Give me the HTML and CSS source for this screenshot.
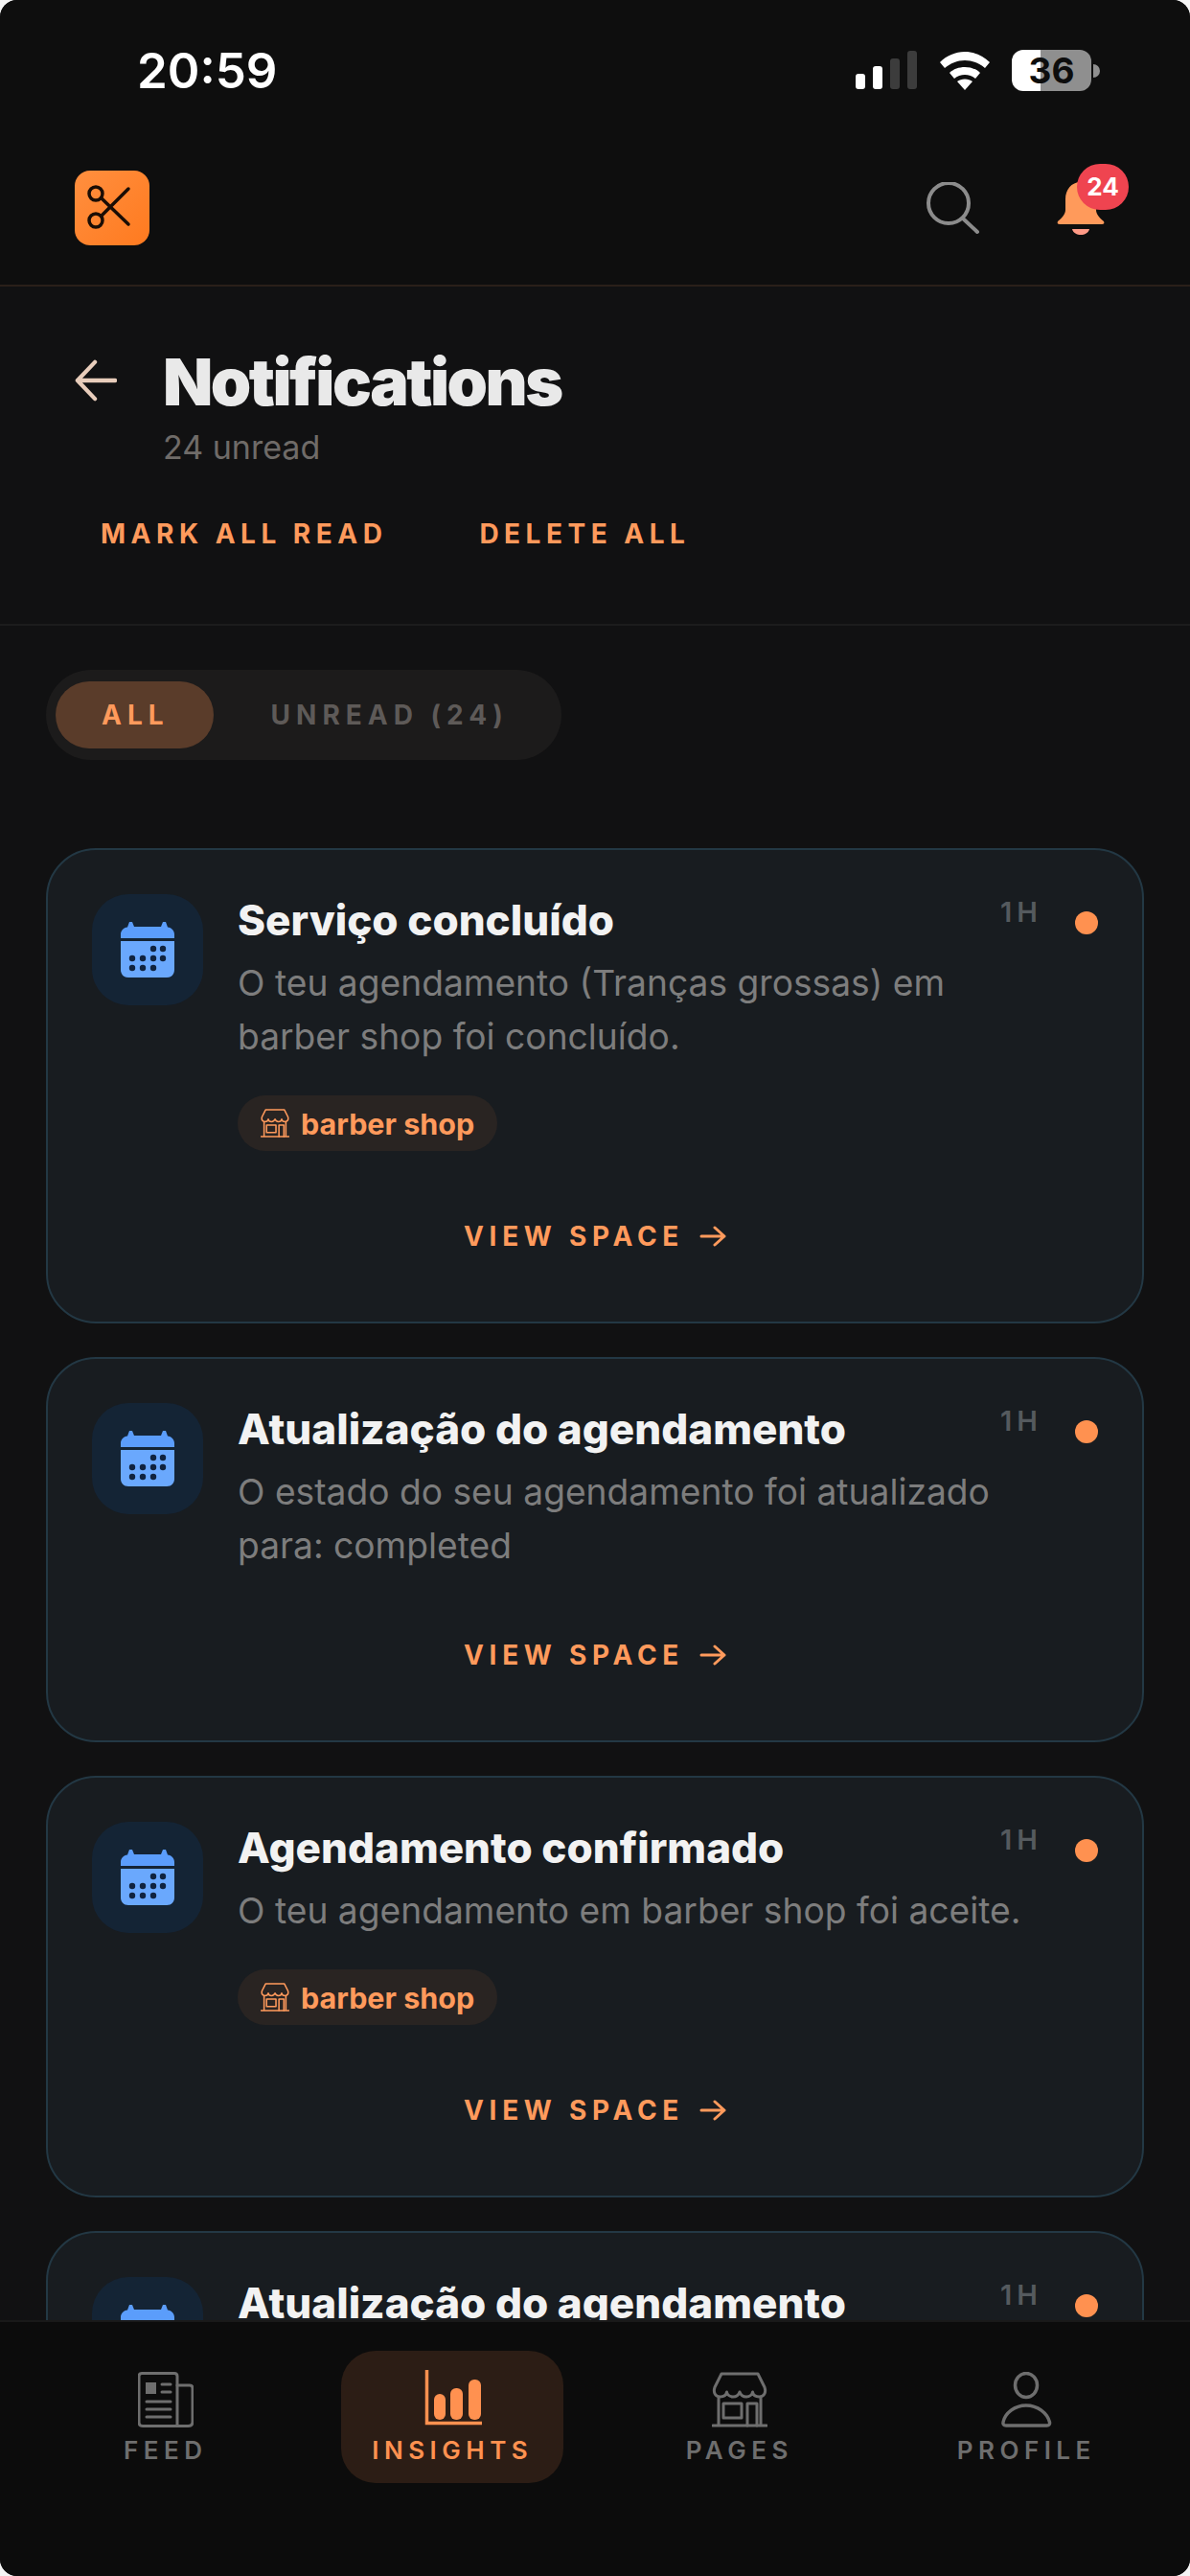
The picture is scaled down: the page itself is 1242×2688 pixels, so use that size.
FILE: index.html
```html
<!DOCTYPE html>
<html>
<head>
    <title>Notifications</title>
    <link rel="stylesheet" href="styles.css">
</head>
<body>
    <svg class="defs" width="0" height="0">
        <symbol id="calendar" viewBox="0 0 58 58">
            <path d="M10 0h3l2 5h28l2-5h3l2 5.500c4 .5 7 3.500 7 7.500v4H1v-4c0-4 3-7 7-7.500z" fill="#5b9dfb"/>
            <path d="M1 20h56v30c0 4.500-3 8-8 8H9c-5 0-8-3.500-8-8z" fill="#6aa8fd"/>
            <g fill="#10233f">
                <circle cx="35" cy="28" r="3.200"/><circle cx="45" cy="28" r="3.200"/>
                <circle cx="13" cy="38" r="3.200"/><circle cx="24" cy="38" r="3.200"/><circle cx="35" cy="38" r="3.200"/><circle cx="45" cy="38" r="3.200"/>
                <circle cx="13" cy="48" r="3.200"/><circle cx="24" cy="48" r="3.200"/><circle cx="35" cy="48" r="3.200"/>
            </g>
        </symbol>
        <symbol id="store" viewBox="0 0 58 58">
            <g fill="none" stroke="currentColor" stroke-width="3" stroke-linecap="round" stroke-linejoin="round">
                <path d="M10 2h38l7 14c2 6-1 10-5.500 10-4 0-6.500-2-7-5-.5 3-3.500 5-6.500 5s-6-2-7-5c-1 3-4 5-7 5s-6-2-6.500-5c-.5 3-3 5-7 5C4 26 1 22 3 16z"/>
                <path d="M7 27v29M51 27v29M1 56h56"/>
                <path d="M12 33h19v15H12z"/>
                <path d="M37 56V33h10v23"/>
            </g>
        </symbol>
    </svg>

    <div class="screen">
        <div class="status-bar">
            <span class="clock">20:59</span>
            <div class="status-icons">
                <div class="signal">
                    <i class="bar bar-1"></i>
                    <i class="bar bar-2"></i>
                    <i class="bar bar-3"></i>
                    <i class="bar bar-4"></i>
                </div>
                <svg class="wifi" viewBox="0 0 56 42">
                    <path d="M2 13C9 6 18 2 28 2s19 4 26 11l-5 6c-6-5-13-8-21-8S13 14 7 19z" fill="#fff"/>
                    <path d="M12 24c4-4 10-6 16-6s12 2 16 6l-5 6c-3-2.500-7-4-11-4s-8 1.500-11 4z" fill="#fff"/>
                    <path d="M20 33c2-1.500 5-2.500 8-2.500s6 1 8 2.500L28 42z" fill="#fff"/>
                </svg>
                <div class="battery">
                    <div class="battery-body"><span>36</span></div>
                    <i class="battery-tip"></i>
                </div>
            </div>
        </div>

        <header class="topbar">
            <div class="logo">
                <svg viewBox="0 0 78 78" width="78" height="78" fill="none" stroke="#1a0d05" stroke-width="3.500" stroke-linecap="round">
                    <circle cx="22" cy="24" r="7"/>
                    <circle cx="22" cy="52" r="7"/>
                    <path d="M28 29l28 27M28 47L56 19"/>
                </svg>
            </div>
            <div class="topbar-actions">
                <svg class="search" viewBox="0 0 60 60" fill="none" stroke="#8c8c8c" stroke-width="4" stroke-linecap="round">
                    <circle cx="26" cy="22" r="21"/>
                    <path d="M41 38l15 14"/>
                </svg>
                <div class="bell">
                    <svg viewBox="0 0 64 64" width="64" height="64">
                        <path d="M32 8c-10 0-16 8-16 18v11c0 4-3 8-8 12-1 2 0 3 2 3h44c2 0 3-1 2-3-5-4-8-8-8-12V26c0-10-6-18-16-18z" fill="#ff9a5b"/>
                        <path d="M23 57h18c-1 4-5 6-9 6s-8-2-9-6z" fill="#ff9a86"/>
                    </svg>
                    <span class="badge">24</span>
                </div>
            </div>
        </header>

        <section class="page-head">
            <div class="title-row">
                <svg class="back" viewBox="0 0 46 46" fill="none" stroke="#e8cdbb" stroke-width="4.500" stroke-linecap="round" stroke-linejoin="round">
                    <path d="M44 23H3M22 3L3 23l19 20"/>
                </svg>
                <div>
                    <h1>Notifications</h1>
                    <p class="unread">24 unread</p>
                </div>
            </div>
            <div class="head-actions">
                <a>MARK ALL READ</a>
                <a>DELETE ALL</a>
            </div>
        </section>

        <main class="content">
            <div class="tabs">
                <span class="tab tab-active">ALL</span>
                <span class="tab">UNREAD (24)</span>
            </div>

            <article class="card">
                <div class="card-top">
                    <div class="card-icon"><svg width="58" height="58"><use href="#calendar"/></svg></div>
                    <div class="card-body">
                        <div class="card-head">
                            <h2>Serviço concluído</h2>
                            <span class="time">1H</span>
                            <i class="dot"></i>
                        </div>
                        <p>O teu agendamento (Tranças grossas) em barber shop foi concluído.</p>
                        <span class="chip"><svg width="30" height="30"><use href="#store"/></svg>barber shop</span>
                    </div>
                </div>
                <a class="view">VIEW SPACE <svg viewBox="0 0 28 24" width="28" height="24" fill="none" stroke="#ff9a5c" stroke-width="3" stroke-linecap="round" stroke-linejoin="round"><path d="M2 12h24M16 3l10 9-10 9"/></svg></a>
            </article>

            <article class="card">
                <div class="card-top">
                    <div class="card-icon"><svg width="58" height="58"><use href="#calendar"/></svg></div>
                    <div class="card-body">
                        <div class="card-head">
                            <h2>Atualização do agendamento</h2>
                            <span class="time">1H</span>
                            <i class="dot"></i>
                        </div>
                        <p>O estado do seu agendamento foi atualizado para: completed</p>
                    </div>
                </div>
                <a class="view">VIEW SPACE <svg viewBox="0 0 28 24" width="28" height="24" fill="none" stroke="#ff9a5c" stroke-width="3" stroke-linecap="round" stroke-linejoin="round"><path d="M2 12h24M16 3l10 9-10 9"/></svg></a>
            </article>

            <article class="card">
                <div class="card-top">
                    <div class="card-icon"><svg width="58" height="58"><use href="#calendar"/></svg></div>
                    <div class="card-body">
                        <div class="card-head">
                            <h2>Agendamento confirmado</h2>
                            <span class="time">1H</span>
                            <i class="dot"></i>
                        </div>
                        <p>O teu agendamento em barber shop foi aceite.</p>
                        <span class="chip"><svg width="30" height="30"><use href="#store"/></svg>barber shop</span>
                    </div>
                </div>
                <a class="view">VIEW SPACE <svg viewBox="0 0 28 24" width="28" height="24" fill="none" stroke="#ff9a5c" stroke-width="3" stroke-linecap="round" stroke-linejoin="round"><path d="M2 12h24M16 3l10 9-10 9"/></svg></a>
            </article>

            <article class="card">
                <div class="card-top">
                    <div class="card-icon"><svg width="58" height="58"><use href="#calendar"/></svg></div>
                    <div class="card-body">
                        <div class="card-head">
                            <h2>Atualização do agendamento</h2>
                            <span class="time">1H</span>
                            <i class="dot"></i>
                        </div>
                    </div>
                </div>
            </article>
        </main>

        <nav class="bottom-nav">
            <div class="nav-item">
                <svg viewBox="0 0 58 58" width="58" height="58" fill="none" stroke="currentColor" stroke-width="3" stroke-linejoin="round" stroke-linecap="round">
                    <path d="M4 1.500h34c2 0 3 1 3 3V56.500H5c-2.500 0-4-1.500-4-4V4.500c0-2 1-3 3-3z"/>
                    <path d="M41 14h13c2 0 3 1 3 3v35c0 3-2 4.500-4.500 4.500H41"/>
                    <rect x="8" y="11" width="11" height="12" fill="currentColor" stroke="none"/>
                    <path d="M25 13h9M25 21h9M9 31h25M9 39h25M9 47h25"/>
                </svg>
                <span>FEED</span>
            </div>
            <div class="nav-item nav-active">
                <svg class="insights-icon" viewBox="0 0 58 58" width="58" height="58">
                    <path d="M2.500 -2v55.500h57.500" fill="none" stroke="currentColor" stroke-width="3.500"/>
                    <rect x="10" y="23" width="12" height="27" rx="6" fill="currentColor"/>
                    <rect x="27" y="17" width="13" height="33" rx="6" fill="currentColor"/>
                    <rect x="46" y="8" width="13" height="42" rx="6" fill="currentColor"/>
                </svg>
                <span>INSIGHTS</span>
            </div>
            <div class="nav-item">
                <svg width="58" height="58"><use href="#store"/></svg>
                <span>PAGES</span>
            </div>
            <div class="nav-item">
                <svg viewBox="0 0 58 58" width="58" height="58" fill="none" stroke="currentColor" stroke-width="3.500" stroke-linejoin="round">
                    <ellipse cx="29" cy="14" rx="11.500" ry="12.500"/>
                    <path d="M8 56c-2.500 0-3.500-1.500-3-3.500C7 43 17 35 29 35s22 8 24.500 17.500c.5 2-.5 3.500-3 3.500z"/>
                </svg>
                <span>PROFILE</span>
            </div>
        </nav>
    </div>
</body>
</html>
```

FILE: styles.css
```css
* {
    box-sizing: border-box;
}
body {
    margin: 0;
    background-color: #f4f4f4;
    font-family: Inter, "Noto Sans", sans-serif;
}
h1, h2, p {
    margin: 0;
}
.defs {
    display: block;
    height: 0;
}
.screen {
    width: 1242px;
    height: 2688px;
    display: flex;
    flex-direction: column;
    overflow: hidden;
    border-radius: 18px;
    background-color: #111112;
}

/* status bar */
.status-bar {
    flex: none;
    height: 146px;
    padding: 0 94px 0 143px;
    display: flex;
    justify-content: space-between;
    background-color: #0e0e0e;
}
.clock {
    margin-top: 44px;
    font-size: 51px;
    line-height: 60px;
    font-weight: 600;
    color: #fff;
}
.status-icons {
    display: flex;
    align-items: flex-start;
    margin-top: 52px;
}
.signal {
    display: flex;
    align-items: flex-end;
    gap: 8px;
    height: 41px;
    margin-right: 22px;
}
.bar {
    display: block;
    width: 10px;
    border-radius: 3px;
    background-color: #fff;
}
.bar-1 {
    height: 16px;
}
.bar-2 {
    height: 24px;
}
.bar-3 {
    height: 32px;
    background-color: #3c3c3c;
}
.bar-4 {
    height: 40px;
    background-color: #3c3c3c;
}
.wifi {
    width: 56px;
    height: 42px;
    margin-right: 21px;
}
.battery {
    display: flex;
    align-items: center;
}
.battery-body {
    width: 83px;
    height: 43px;
    border-radius: 12px;
    background: linear-gradient(90deg, #fff 36%, #8f8f8f 36%);
    text-align: center;
    font-size: 37px;
    line-height: 43px;
    font-weight: 700;
    color: #0d0d0d;
}
.battery-tip {
    display: block;
    width: 7px;
    height: 14px;
    margin-left: 2px;
    border-radius: 0 7px 7px 0;
    background-color: #8f8f8f;
}

/* top bar */
.topbar {
    flex: none;
    height: 153px;
    padding: 32px 82px 0 78px;
    display: flex;
    justify-content: space-between;
    background-color: #0e0e0e;
    border-bottom: 2px solid #2a1f19;
}
.logo {
    width: 78px;
    height: 78px;
    border-radius: 16px;
    background: linear-gradient(135deg, #ff8f3f, #ff7a1f);
}
.topbar-actions {
    display: flex;
    gap: 72px;
    margin-top: 12px;
}
.search {
    width: 60px;
    height: 60px;
}
.bell {
    position: relative;
    width: 64px;
    height: 64px;
    margin-top: -8px;
}
.badge {
    position: absolute;
    left: 28px;
    top: -11px;
    width: 54px;
    height: 48px;
    border-radius: 24px;
    background-color: #ef4450;
    text-align: center;
    font-size: 26px;
    line-height: 48px;
    font-weight: 700;
    color: #fff;
}

/* page heading */
.page-head {
    flex: none;
    height: 354px;
    padding: 61px 0 0 78px;
    border-bottom: 2px solid #1c1c1c;
}
.title-row {
    display: flex;
    gap: 48px;
}
.back {
    width: 44px;
    height: 44px;
    margin-top: 15px;
}
h1 {
    font-size: 68px;
    line-height: 76px;
    font-weight: 900;
    letter-spacing: -2.500px;
    color: #e9e9e9;
}
.unread {
    margin-top: 11px;
    font-size: 34px;
    line-height: 40px;
    color: #6f6b68;
}
.head-actions {
    display: flex;
    gap: 96px;
    margin-top: 50px;
    padding-left: 27px;
    font-size: 28px;
    line-height: 40px;
    font-weight: 700;
    letter-spacing: 5.500px;
    color: #ff9a5c;
}

/* list */
.content {
    flex: 1;
    min-height: 0;
    overflow: hidden;
    padding: 46px 48px 0;
}
.tabs {
    width: 538px;
    height: 94px;
    padding: 12px 10px;
    display: flex;
    border-radius: 47px;
    background-color: #1c1b1b;
    margin-bottom: 92px;
}
.tab {
    padding: 0 0 0 60px;
    white-space: nowrap;
    font-size: 28px;
    line-height: 70px;
    font-weight: 700;
    letter-spacing: 6px;
    color: #5e5a58;
}
.tab-active {
    padding: 0 46px 0 48px;
    border-radius: 35px;
    background-color: #5a3c2a;
    color: #ff9a5c;
}
.card {
    margin-bottom: 35px;
    padding: 46px 46px 69px;
    border: 2px solid #233844;
    border-radius: 52px;
    background-color: #181c20;
}
.card-top {
    display: flex;
    gap: 36px;
}
.card-icon {
    flex: none;
    width: 116px;
    height: 116px;
    display: flex;
    align-items: center;
    justify-content: center;
    border-radius: 38px;
    background-color: #142435;
}
.card-body {
    flex: 1;
    min-width: 0;
}
.card-head {
    display: flex;
    align-items: flex-start;
}
h2 {
    flex: 1;
    font-size: 44px;
    line-height: 54px;
    font-weight: 800;
    color: #f2f2f2;
}
.time {
    margin-right: 34px;
    font-size: 29px;
    line-height: 38px;
    font-weight: 600;
    letter-spacing: 5px;
    color: #555a5e;
}
.dot {
    display: block;
    width: 24px;
    height: 24px;
    margin-top: 18px;
    border-radius: 50%;
    background-color: #ff9150;
}
.card-body p {
    margin-top: 11px;
    padding-right: 40px;
    font-size: 37.200px;
    line-height: 56px;
    color: #7d7d7d;
}
.chip {
    display: inline-flex;
    align-items: center;
    gap: 12px;
    height: 58px;
    margin-top: 33px;
    margin-bottom: 3px;
    padding: 0 24px;
    border-radius: 29px;
    background-color: #292422;
    font-size: 30.500px;
    font-weight: 700;
    color: #ff9a5c;
}
.view {
    display: flex;
    align-items: center;
    justify-content: center;
    gap: 16px;
    margin-top: 66px;
    height: 40px;
    font-size: 28px;
    font-weight: 700;
    letter-spacing: 5.700px;
    color: #ff9a5c;
}

/* bottom nav */
.bottom-nav {
    flex: none;
    height: 267px;
    padding: 30px 21px 0 23px;
    display: grid;
    grid-template-columns: repeat(4, 1fr);
    align-items: start;
    background-color: #0c0c0c;
    border-top: 2px solid #1a1a1a;
}
.nav-item {
    width: 232px;
    height: 138px;
    margin: 0 auto;
    padding-top: 22px;
    display: flex;
    flex-direction: column;
    align-items: center;
    gap: 6px;
    border-radius: 36px;
    color: #6e6e6e;
    font-size: 26px;
    line-height: 36px;
    font-weight: 600;
    letter-spacing: 5.500px;
}
.nav-active {
    background-color: #2c1d15;
    color: #ff9150;
}
.insights-icon {
    overflow: visible;
}
```
